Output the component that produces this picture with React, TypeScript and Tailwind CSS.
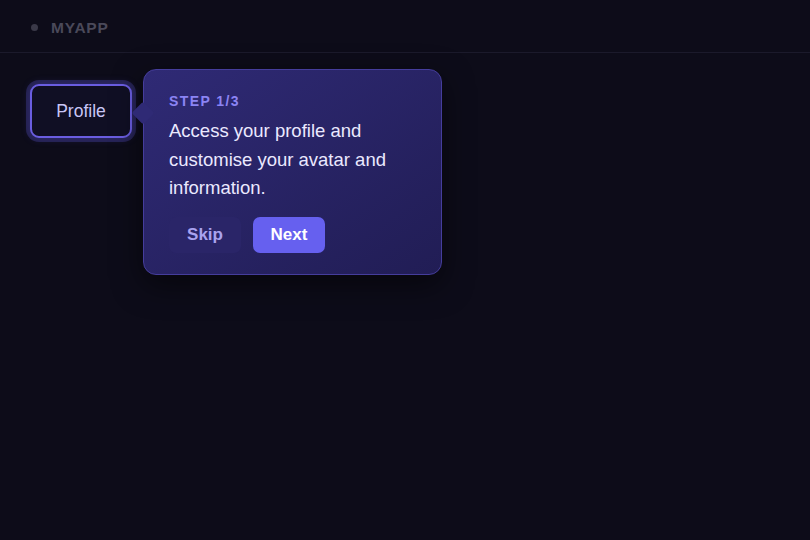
export default function App() {
  return (
    <div
      className="min-h-screen w-full bg-[#0d0c19] text-white"
      style={{ fontFamily: '"Liberation Sans", Arial, sans-serif' }}
    >
      <header className="flex h-[53px] items-center gap-[13px] border-b border-[#1b1a2b] px-[31px] pt-[3px]">
        <span className="h-[7px] w-[7px] rounded-full bg-[#3a3948]" />
        <span className="text-[15.5px] font-bold tracking-[0.05em] text-[#4a4959]">MYAPP</span>
      </header>

      <main className="px-[30px] pt-[31px]">
        <div className="relative inline-block">
          <button className="flex h-[54px] w-[102px] items-center justify-center rounded-[9px] border-2 border-[#6a5de0] bg-[#100f24] pt-[1px] text-[17.5px] text-[#c9c6f6] shadow-[0_0_0_4px_rgba(99,90,230,0.25),0_0_10px_rgba(99,90,230,0.25)]">
            Profile
          </button>

          <div className="absolute left-[113px] top-[-15px] w-[299px] rounded-[13px] border border-[#453d9c] bg-gradient-to-br from-[#2f2a75] to-[#211d55] px-[25px] pb-[21px] pt-[23px] shadow-[0_10px_30px_rgba(0,0,0,0.5)]">
            <div className="absolute left-[-9px] top-[35px] h-[16px] w-[16px] rotate-45 rounded-[2px] bg-[#2f2a75]" />
            <div className="relative text-[14px] font-bold leading-[17px] tracking-[0.1em] text-[#8b84f4]">STEP 1/3</div>
            <p className="relative mt-[7px] text-[18.5px] leading-[28.5px] text-[#ebe9ff]">
              Access your profile and customise your avatar and information.
            </p>
            <div className="relative mt-[14px] flex gap-[12px]">
              <button className="h-[36px] w-[72px] rounded-[7px] bg-[#2a2568] text-[17px] font-bold text-[#a9a3ef]">
                Skip
              </button>
              <button className="h-[36px] w-[72px] rounded-[7px] bg-[#6660ef] text-[17px] font-bold text-white">
                Next
              </button>
            </div>
          </div>
        </div>
      </main>
    </div>
  );
}
